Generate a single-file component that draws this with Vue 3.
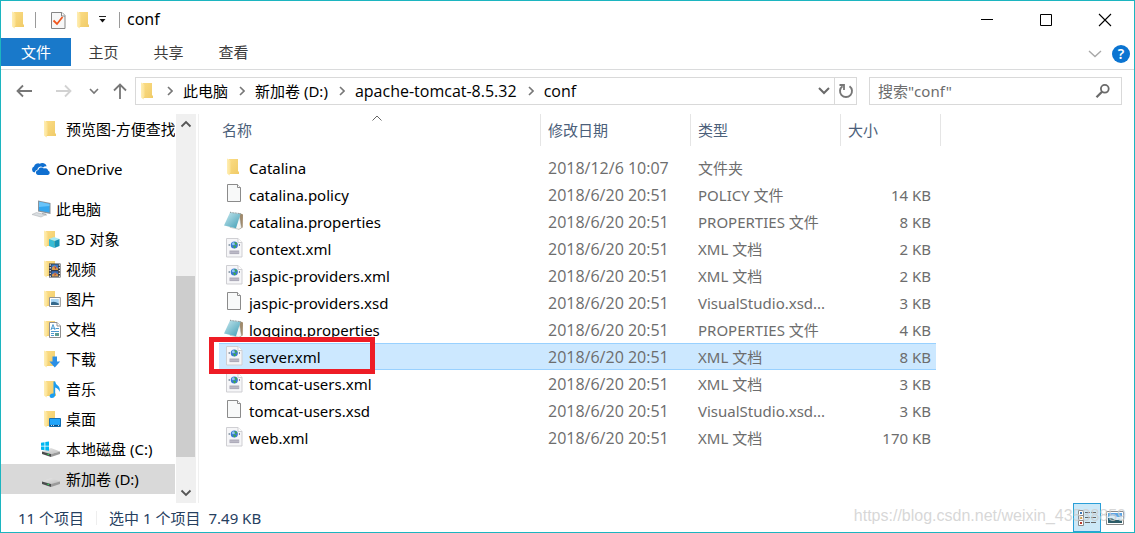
<script setup>
import { ref } from 'vue'

const crumbs = [
  { text: '此电脑' },
  { text: '新加卷 (D:)' },
  { text: 'apache-tomcat-8.5.32', latin: true },
  { text: 'conf', latin: true }
]
const tabs = ['文件', '主页', '共享', '查看']
const query = ref('')

const groups = [
  [{ name: '预览图-方便查找', icons: ['folder'], sub: true }],
  [{ name: 'OneDrive', icons: ['cloud'] }],
  [
    { name: '此电脑', icons: ['pc'] },
    { name: '3D 对象', icons: ['folder', 'o-cube'], sub: true },
    { name: '视频', icons: ['folder', 'o-film'], sub: true },
    { name: '图片', icons: ['folder', 'o-picture'], sub: true },
    { name: '文档', icons: ['folder', 'o-doc'], sub: true },
    { name: '下载', icons: ['folder', 'o-down'], sub: true },
    { name: '音乐', icons: ['folder', 'o-music'], sub: true },
    { name: '桌面', icons: ['folder', 'o-desk'], sub: true },
    { name: '本地磁盘 (C:)', icons: ['drive', 'o-win'], sub: true },
    { name: '新加卷 (D:)', icons: ['drive'], sub: true, active: true }
  ]
]

const files = [
  { name: 'Catalina', icon: 'folder', date: '2018/12/6 10:07', type: '文件夹', size: '' },
  { name: 'catalina.policy', icon: 'file', date: '2018/6/20 20:51', type: 'POLICY 文件', size: '14 KB' },
  { name: 'catalina.properties', icon: 'note', date: '2018/6/20 20:51', type: 'PROPERTIES 文件', size: '8 KB' },
  { name: 'context.xml', icon: 'xml', date: '2018/6/20 20:51', type: 'XML 文档', size: '2 KB' },
  { name: 'jaspic-providers.xml', icon: 'xml', date: '2018/6/20 20:51', type: 'XML 文档', size: '2 KB' },
  { name: 'jaspic-providers.xsd', icon: 'file', date: '2018/6/20 20:51', type: 'VisualStudio.xsd...', size: '3 KB' },
  { name: 'logging.properties', icon: 'note', date: '2018/6/20 20:51', type: 'PROPERTIES 文件', size: '4 KB' },
  { name: 'server.xml', icon: 'xml', date: '2018/6/20 20:51', type: 'XML 文档', size: '8 KB', selected: true },
  { name: 'tomcat-users.xml', icon: 'xml', date: '2018/6/20 20:51', type: 'XML 文档', size: '3 KB' },
  { name: 'tomcat-users.xsd', icon: 'file', date: '2018/6/20 20:51', type: 'VisualStudio.xsd...', size: '3 KB' },
  { name: 'web.xml', icon: 'xml', date: '2018/6/20 20:51', type: 'XML 文档', size: '170 KB' }
]
</script>

<template>
  <div class="window">
    <svg class="defs" width="0" height="0" aria-hidden="true">
      <defs>
        <linearGradient id="g-flap" x1="0" y1="0" x2="1" y2="0">
          <stop offset="0" stop-color="#ffeeb4" /><stop offset="1" stop-color="#fbe08f" />
        </linearGradient>
        <linearGradient id="g-body" x1="0" y1="0" x2="1" y2="1">
          <stop offset="0" stop-color="#fbdc84" /><stop offset="1" stop-color="#f0cb68" />
        </linearGradient>
        <linearGradient id="g-note" x1="0" y1="0" x2="1" y2="1">
          <stop offset="0" stop-color="#c9e9f0" /><stop offset="1" stop-color="#3f9db4" />
        </linearGradient>
        <linearGradient id="g-drive" x1="0" y1="0" x2="1" y2="1">
          <stop offset="0" stop-color="#ececec" /><stop offset="1" stop-color="#bcbcbc" />
        </linearGradient>
      </defs>
      <symbol id="folder" viewBox="0 0 20 20">
        <path d="M5 2h9v12.500h1V17H5z" fill="url(#g-body)" />
        <path d="M3 1.600l2.600 1.200q1 .5 1 1.500V15q0 .8-.8 1.300L5.600 18.400 3 16.500z" fill="url(#g-flap)" />
      </symbol>
      <symbol id="file" viewBox="0 0 20 20">
        <path d="M3.500 .5h10l3 3v14h-13z" fill="#f8f9f9" stroke="#8b8b8b" />
        <path d="M13.500 .5v3h3" fill="#fff" stroke="#8b8b8b" />
      </symbol>
      <symbol id="note" viewBox="0 0 20 20">
        <path d="M15.500 2l3.500 1.500-.3 13-4.200 2z" fill="#a08a6c" />
        <path d="M15 2.800l2.500 14-2.500 1.500-9-2z" fill="#f7f7f4" stroke="#9a9d99" stroke-width=".5" />
        <path d="M6 1.500l10.500 1.500-4.500 14.200L0 14.500z" fill="url(#g-note)" />
        <path d="M6 1.300l10.500 1.400" stroke="#8d9da0" stroke-width="1.200" stroke-dasharray="1 .6" fill="none" />
      </symbol>
      <symbol id="xml" viewBox="0 0 20 20">
        <path d="M2.500 .5h11.500l4 4v14.500H2.500z" fill="#f6f6f8" stroke="#cfcfd3" />
        <path d="M14 .5v4h4" fill="#fff" stroke="#cfcfd3" />
        <circle cx="10.300" cy="7" r="3.600" fill="#3a78d6" />
        <circle cx="9.400" cy="5.800" r="1.500" fill="#8fc4f4" />
        <path d="M10.500 4q2 .2 2.800 2-.6 1-1.600.7Q10.500 6 10.500 4zM9 7.500l2.500.3.600 1.200-1.800 1.600z" fill="#3fae45" />
        <path d="M5.200 6v2M15.400 6v2" stroke="#6c8091" fill="none" />
        <path d="M5.500 12.500h9.700v3.600H5.500z" fill="#aeacba" /><path d="M5.500 14.300h9.700" stroke="#c9c8d2" stroke-width=".6" />
      </symbol>
      <symbol id="cloud" viewBox="0 0 20 20">
        <path d="M3.600 13.600A3.200 3.200 0 0 1 3 7.500a4.300 4.300 0 0 1 5.800-2.800A4.800 4.800 0 0 1 15.700 7.200q-2.400-.2-3.700 1.300Q10 6.800 7.800 8.200 6.500 9 6.600 10.400 4.400 11 3.600 13.600z" fill="#0f6fd0" />
        <path d="M6.800 16a2.600 2.600 0 0 1 .5-5.100 3.300 3.300 0 0 1 5.500-1.500 3.400 3.400 0 0 1 4.500 2.400A2.200 2.200 0 0 1 17 16z" fill="#0f6fd0" />
      </symbol>
      <symbol id="pc" viewBox="0 0 20 20">
        <path d="M7 1.500l12.500 2.500v11L7 12.500z" fill="#89929b" />
        <path d="M8 2.800l10.500 2.100v8.700L8 11.400z" fill="#35a7ef" />
        <path d="M8 2.800l10.500 2.100v2L8 8z" fill="#69c4fa" />
        <path d="M11 14l4 .8 1 1.700-5-.8z" fill="#9da3a8" />
        <path d="M1 15.500l4.500-2 9 2.300-4.500 2.200z" fill="#d9dde0" stroke="#b0b5b9" stroke-width=".6" />
      </symbol>
      <symbol id="drive" viewBox="0 0 20 20">
        <path d="M1 12.500L10 9l9 3.500-9 2.500z" fill="url(#g-drive)" />
        <path d="M1 12.500l9 2.500V18l-9-3z" fill="#4b4d4e" />
        <path d="M10 15l9-2.500v2.500L10 18z" fill="#9a9a9a" />
        <path d="M6.500 15.200l1.500.5" stroke="#36d35a" stroke-width="1.300" />
      </symbol>
      <symbol id="o-win" viewBox="0 0 20 20">
        <path d="M0 3.700l3.500-.5v3.600H0zM4.300 3L8 2.500v4.300H4.300zM0 7.600h3.500v3.600L0 10.700zM4.300 7.600H8v4.200l-3.700-.5z" fill="#00b7f1" />
      </symbol>
      <symbol id="o-cube" viewBox="0 0 20 20">
        <path d="M8 10l5-2 5.500 2-5 2z" fill="#a5e9f5" />
        <path d="M8 10l5.500 2v7L8 17z" fill="#37bcd5" /><path d="M13.500 12l5-2v7l-5 2z" fill="#1591b5" />
      </symbol>
      <symbol id="o-film" viewBox="0 0 20 20">
        <path d="M8 4.500h11.500v14H8z" fill="#35383f" />
        <path d="M10.500 5.500H17V11h-6.500z" fill="#3c79c9" /><path d="M10.500 12.200H17v5.300h-6.500z" fill="#3568b6" />
        <path d="M11 8.500l2.500-2L17 9.500V11h-6zM11 15.500l3-2 3 2v2h-6z" fill="#d99a48" />
        <path d="M13 7l2.500 1.500-1 2zM13.500 14l2 1-2 2z" fill="#a33e55" />
        <path d="M9.200 5.300v13M18.300 5.300v13" stroke="#fff" stroke-width="1.100" stroke-dasharray="1.400 1.400" />
      </symbol>
      <symbol id="o-picture" viewBox="0 0 20 20">
        <path d="M8.500 8.500h10.800v9H8.500z" fill="#fff" stroke="#929292" />
        <path d="M10 10h7.800v6H10z" fill="#a9d6f5" /><path d="M10 13.500q3-2 7.800 1V16H10z" fill="#36698c" />
      </symbol>
      <symbol id="o-doc" viewBox="0 0 20 20">
        <path d="M8.500 3.500h7.500l3.500 3.500v11.500h-11z" fill="#fff" stroke="#8f8f8f" />
        <path d="M16 3.500V7h3.500" fill="#fff" stroke="#8f8f8f" />
        <path d="M10 11l2-5.500 2 5.500M10.500 9.300h3M14.500 9.500H18M10 12.500h8M10 14.500h3M10 16.500h3" stroke="#3a8ec9" fill="none" stroke-width=".9" />
        <path d="M14 14h4v3h-4z" fill="#5c9d94" />
      </symbol>
      <symbol id="o-down" viewBox="0 0 20 20">
        <path d="M11.500 7.500h4.500v5h3.200l-5.400 6-5.400-6h3.100z" fill="#2c8fe5" />
      </symbol>
      <symbol id="o-music" viewBox="0 0 20 20">
        <path d="M12.500 2.500h1.700q.3 2.500 2.500 4 3 2.500 1.800 6.500-.6-3.500-4.300-4.500V16q-.4 2.800-3.500 3-2.500-.3-2-2.500.8-2.500 3.800-2z" fill="#1b9df0" />
      </symbol>
      <symbol id="o-desk" viewBox="0 0 20 20">
        <path d="M8.500 9.500h11v8h-11z" fill="#20a5fb" stroke="#1570b4" />
        <path d="M9 16.500h10" stroke="#0b4f86" stroke-width="1.200" /><path d="M10 16.500h1M12 16.500h1M17 16.500h1" stroke="#fff" stroke-width=".8" />
      </symbol>
    </svg>

    <header class="titlebar">
      <svg class="icon"><use href="#folder" /></svg>
      <span class="sep"></span>
      <button class="quick" aria-label="属性">
        <svg width="20" height="20" viewBox="0 0 20 20">
          <path d="M3.500 2.500h10.500l3 3v13H3.500z" fill="#f7f7f7" stroke="#868686" />
          <path d="M13.500 2.500V6h3.500" fill="#fff" stroke="#868686" />
          <path d="M5.500 10.500l3.500 3.500 5.500-7" fill="none" stroke="#f0571f" stroke-width="1.800" />
        </svg>
      </button>
      <button class="quick" aria-label="新建文件夹"><svg class="icon"><use href="#folder" /></svg></button>
      <button class="more" aria-label="自定义快速访问工具栏">
        <svg width="8" height="8" viewBox="0 0 8 8"><path d="M0 .5h7" stroke="#222" /><path d="M.5 3h6l-3 3.500z" fill="#111" /></svg>
      </button>
      <span class="sep"></span>
      <h1 class="title">conf</h1>
      <div class="winbtns">
        <button aria-label="最小化"><svg width="14" height="14" viewBox="0 0 14 14"><path d="M1 6.500h12" stroke="#000" /></svg></button>
        <button aria-label="最大化"><svg width="14" height="14" viewBox="0 0 14 14"><path d="M1.500 1.500h11v11h-11z" fill="none" stroke="#000" /></svg></button>
        <button aria-label="关闭"><svg width="14" height="14" viewBox="0 0 14 14"><path d="M1 1l12 12M13 1L1 13" stroke="#000" stroke-width="1.100" /></svg></button>
      </div>
    </header>

    <nav class="ribbon">
      <button v-for="(t, i) in tabs" :key="t" class="tab" :class="{ primary: i === 0 }">{{ t }}</button>
      <span class="grow"></span>
      <button class="plain" aria-label="展开功能区"><svg width="14" height="8" viewBox="0 0 14 8"><path d="M1 1l6 5.500L13 1" fill="none" stroke="#a8a8a8" stroke-width="1.400" /></svg></button>
      <button class="help" aria-label="帮助">?</button>
    </nav>

    <div class="navbar">
      <div class="arrows">
        <button class="plain" aria-label="后退"><svg width="18" height="18" viewBox="0 0 18 18"><path d="M17 9H2.500M8 3.500L2.500 9 8 14.500" fill="none" stroke="#777" stroke-width="1.800" /></svg></button>
        <button class="plain" aria-label="前进"><svg width="18" height="18" viewBox="0 0 18 18"><path d="M1 9h14.500M10 3.500L15.500 9 10 14.500" fill="none" stroke="#d2d2d2" stroke-width="1.800" /></svg></button>
        <button class="plain" aria-label="最近浏览的位置"><svg width="10" height="18" viewBox="0 0 10 18"><path d="M1 7l4 4 4-4" fill="none" stroke="#777" stroke-width="1.600" /></svg></button>
        <button class="plain" aria-label="上移"><svg width="16" height="18" viewBox="0 0 16 18"><path d="M8 17V2.500M2 8.500l6-6 6 6" fill="none" stroke="#777" stroke-width="1.800" /></svg></button>
      </div>
      <div class="address">
        <svg class="icon"><use href="#folder" /></svg>
        <template v-for="c in crumbs" :key="c.text">
          <svg class="chev" width="6" height="10" viewBox="0 0 6 10"><path d="M1 1l4 4-4 4" fill="none" stroke="#777" stroke-width="1.600" /></svg>
          <a href="#" class="crumb" :class="{ latin: c.latin }">{{ c.text }}</a>
        </template>
        <span class="grow"></span>
        <button class="addrbtn" aria-label="以前的位置"><svg width="12" height="8" viewBox="0 0 12 8"><path d="M1 1l5 5 5-5" fill="none" stroke="#6a6a6a" stroke-width="2" /></svg></button>
        <button class="addrbtn refresh" aria-label="刷新"><svg width="16" height="16" viewBox="0 0 16 16"><path d="M11.500 3.200A6 6 0 1 1 4.500 3.200" fill="none" stroke="#777" stroke-width="1.900" /><path d="M1.500 2H6v5" fill="none" stroke="#777" stroke-width="1.800" /></svg></button>
      </div>
      <label class="search">
        <input v-model="query" type="text" placeholder='搜索"conf"' aria-label="搜索" />
        <svg width="16" height="16" viewBox="0 0 16 16"><circle cx="9.800" cy="5.800" r="3.900" fill="none" stroke="#6a6a6a" stroke-width="1.800" /><path d="M7 8.700L1.500 14.300" stroke="#6a6a6a" stroke-width="2.200" /></svg>
      </label>
    </div>

    <div class="content">
      <aside class="sidebar">
        <div class="tree">
          <ul v-for="(g, i) in groups" :key="i">
            <li v-for="n in g" :key="n.name">
              <a href="#" class="node" :class="{ sub: n.sub, active: n.active }">
                <svg class="icon"><use v-for="s in n.icons" :key="s" :href="'#' + s" /></svg>
                <span>{{ n.name }}</span>
              </a>
            </li>
          </ul>
        </div>
        <div class="scroll">
          <button aria-label="向上滚动"><svg width="12" height="8" viewBox="0 0 12 8"><path d="M1.500 6.500L6 2l4.500 4.500" fill="none" stroke="#555" stroke-width="1.800" /></svg></button>
          <div class="track"><div class="thumb"></div></div>
          <button aria-label="向下滚动"><svg width="12" height="8" viewBox="0 0 12 8"><path d="M1.500 1.500L6 6l4.500-4.500" fill="none" stroke="#555" stroke-width="1.800" /></svg></button>
        </div>
      </aside>

      <main class="list">
        <table>
          <colgroup><col class="c-name" /><col class="c-mid" /><col class="c-mid" /><col class="c-size" /><col class="c-end" /></colgroup>
          <thead>
            <tr>
              <th class="first">
                名称
                <svg class="sort" width="10" height="6" viewBox="0 0 10 6"><path d="M.5 5.500L5 1l4.500 4.500" fill="none" stroke="#666" /></svg>
              </th>
              <th>修改日期</th><th>类型</th><th>大小</th><th class="end"></th>
            </tr>
          </thead>
          <tbody>
            <tr v-for="f in files" :key="f.name" :class="{ selected: f.selected }">
              <td class="name">
                <div class="cell"><svg class="icon"><use :href="'#' + f.icon" /></svg><span>{{ f.name }}</span></div>
                <span v-if="f.selected" class="mark"></span>
              </td>
              <td class="latin">{{ f.date }}</td><td>{{ f.type }}</td><td class="size">{{ f.size }}</td><td class="end"></td>
            </tr>
          </tbody>
        </table>
      </main>
    </div>

    <footer class="status">
      <span class="count">11 个项目</span>
      <span class="picked">选中 1 个项目</span>
      <span>7.49 KB</span>
      <span class="grow"></span>
      <button class="view on" aria-label="详细信息">
        <svg width="20" height="18" viewBox="0 0 20 18">
          <path d="M1.500 1.500h5v5h-5zM1.500 6.500h5v5h-5zM1.500 11.500h5v5h-5z" fill="#fff" stroke="#8a8a8a" />
          <path d="M3 3h2v2H3z" fill="#3b76b5" /><path d="M3 8h2v2H3z" fill="#d89b4a" /><path d="M3 13h2v2H3z" fill="#b8392c" />
          <path d="M8 3.500h5M14 3.500h5M8 8.500h5M14 8.500h5M8 13.500h5M14 13.500h5" stroke="#666" />
        </svg>
      </button>
      <button class="view" aria-label="大缩略图">
        <svg width="20" height="16" viewBox="0 0 20 16">
          <path d="M1.500 1.500h17v13h-17z" fill="#fff" stroke="#8a8a8a" />
          <path d="M3 3h14v10H3z" fill="#5aa5e6" /><path d="M3 7q4-3 7-1t7 0v4H3z" fill="#d8ebf7" /><path d="M3 8q5 0 7 2h7v3H3z" fill="#2e5d68" />
        </svg>
      </button>
      <span class="watermark">https://blog.csdn.net/weixin_43538859</span>
    </footer>
  </div>
</template>

<style>
body { margin: 0; background: #fff; }
</style>

<style scoped>
* { box-sizing: border-box; }
.window {
  position: relative;
  display: flex;
  flex-direction: column;
  min-height: 100vh;
  border: 1px solid #1cb5c0;
  background: #fff;
  color: #000;
  font: 15px/20px "Noto Sans", "Noto Sans CJK SC", sans-serif;
}
.defs { position: absolute; }
.icon { width: 20px; height: 20px; flex: none; display: block; }
svg { display: block; }
button { font: inherit; color: inherit; border: 0; background: none; padding: 0; margin: 0; display: flex; align-items: center; justify-content: center; }
a { color: inherit; text-decoration: none; }
ul { list-style: none; margin: 0; padding: 0; }
ul + ul { margin-top: 10px; }
.grow { flex: 1; }
.latin { font-family: "Open Sans", sans-serif; font-size: 16px; }

.titlebar { display: flex; align-items: center; height: 37px; padding-left: 8px; }
.sep { width: 1px; height: 16px; background: #9a9a9a; }
.titlebar > .icon { margin-right: 6px; }
.quick { width: 26px; }
.sep + .quick { margin-left: 9px; }
.more { width: 12px; margin-right: 10px; }
.title { margin: 0 0 0 7px; font-size: 16px; line-height: 20px; padding-bottom: 2px; font-weight: 400; flex: 1; }
.winbtns { display: flex; align-self: stretch; }
.winbtns button { width: 59px; }

.ribbon { display: flex; align-items: center; height: 32px; border-bottom: 1px solid #dadbdc; padding-right: 4px; }
.tab { width: 65px; height: 28px; align-self: flex-start; color: #3c3c3c; }
.tab.primary { width: 70px; background: #1979ca; color: #fff; }
.help { width: 18px; height: 18px; margin-left: 10px; border-radius: 50%; background: #0b74d1; color: #fff; font-size: 14px; font-weight: 600; }

.navbar { display: flex; align-items: center; gap: 12px; padding: 7px 12px 9px 14px; }
.arrows { display: flex; align-items: center; gap: 16px; margin-right: -5px; }
.arrows button:nth-child(1) { margin-right: 6px; }
.arrows button:nth-child(4) { margin-left: -3px; }
.address { display: flex; align-items: center; flex: 1; height: 28px; border: 1px solid #d9d9d9; padding-left: 2px; min-width: 0; }
.address > .icon { margin-right: -2px; }
.chev { margin: 0 10px 0 11px; }
.crumb { white-space: nowrap; }
.addrbtn { width: 20px; height: 26px; }
.refresh { width: 22px; border-left: 1px solid #d9d9d9; }
.search { display: flex; align-items: center; width: 253px; height: 28px; border: 1px solid #d9d9d9; padding: 0 10px 0 8px; }
.search input { flex: 1; min-width: 0; border: 0; padding: 0; outline: 0; background: none; font: inherit; }
.search input::placeholder { color: #6d6d6d; opacity: 1; }

.content { display: flex; flex: 1; min-height: 0; }
.sidebar { display: flex; width: 198px; border-right: 1px solid #f0f0f0; }
.tree { flex: 1; min-width: 0; overflow: hidden; }
.node { display: flex; align-items: center; gap: 5px; height: 30px; padding-left: 30px; white-space: nowrap; overflow: hidden; }
.node.sub { padding-left: 40px; }
.node.active { background: #d9d9d9; }
.scroll { display: flex; flex-direction: column; width: 20px; margin: 0 2px 0 1px; background: #f0f0f0; }
.scroll button { height: 20px; }
.track { flex: 1; display: flex; flex-direction: column; justify-content: flex-end; }
.thumb { height: 52%; margin: 0 1px 26px 0; background: #cdcdcd; }

.list { flex: 1; min-width: 0; padding-left: 20px; overflow: hidden; }
table { border-collapse: separate; border-spacing: 0; table-layout: fixed; width: 722px; }
.c-name { width: 321px; }
.c-mid { width: 150px; }
.c-size { width: 96px; }
.c-end { width: 5px; }
th { position: relative; height: 32px; padding: 0 0 0 7px; text-align: left; font-weight: 400; color: #4c607a; border-left: 1px solid #e5e5e5; }
th.first { border-left: 0; padding-left: 3px; }
th.end { border-left: 0; border-right: 1px solid #e5e5e5; padding: 0; }
.sort { position: absolute; top: 1px; left: 153px; }
tbody::before { content: ""; display: block; height: 8px; }
td { height: 27px; padding: 0 0 0 8px; color: #6d6d6d; white-space: nowrap; }
td.name { position: relative; padding: 0 0 0 5px; color: #000; }
td.size { text-align: right; padding: 0 5px 0 0; }
td.end { padding: 0; }
.cell { display: flex; align-items: center; gap: 5px; }
.cell .icon { margin-bottom: 2px; }
.selected td:not(.end) { background: #cce8ff; box-shadow: inset 0 1px #99d1ff, inset 0 -1px #99d1ff; }
.mark { position: absolute; z-index: 1; left: -10px; top: -6px; width: 166px; height: 37px; border: 5px solid #ee1c25; }

.status { position: relative; display: flex; align-items: center; height: 29px; padding: 0 5px 0 17px; color: #26405f; }
.count { margin-right: 12px; padding-right: 12px; border-right: 1px solid #eee; line-height: 14px; }
.picked { margin-right: 8px; }
.view { width: 28px; height: 29px; }
.view.on { background: #cce8f7; border: 1px solid #2a9fd8; }
.watermark { position: absolute; right: 8px; bottom: 6px; font: 16px/20px "Liberation Sans", sans-serif; color: rgba(205, 205, 205, .8); pointer-events: none; }
</style>
